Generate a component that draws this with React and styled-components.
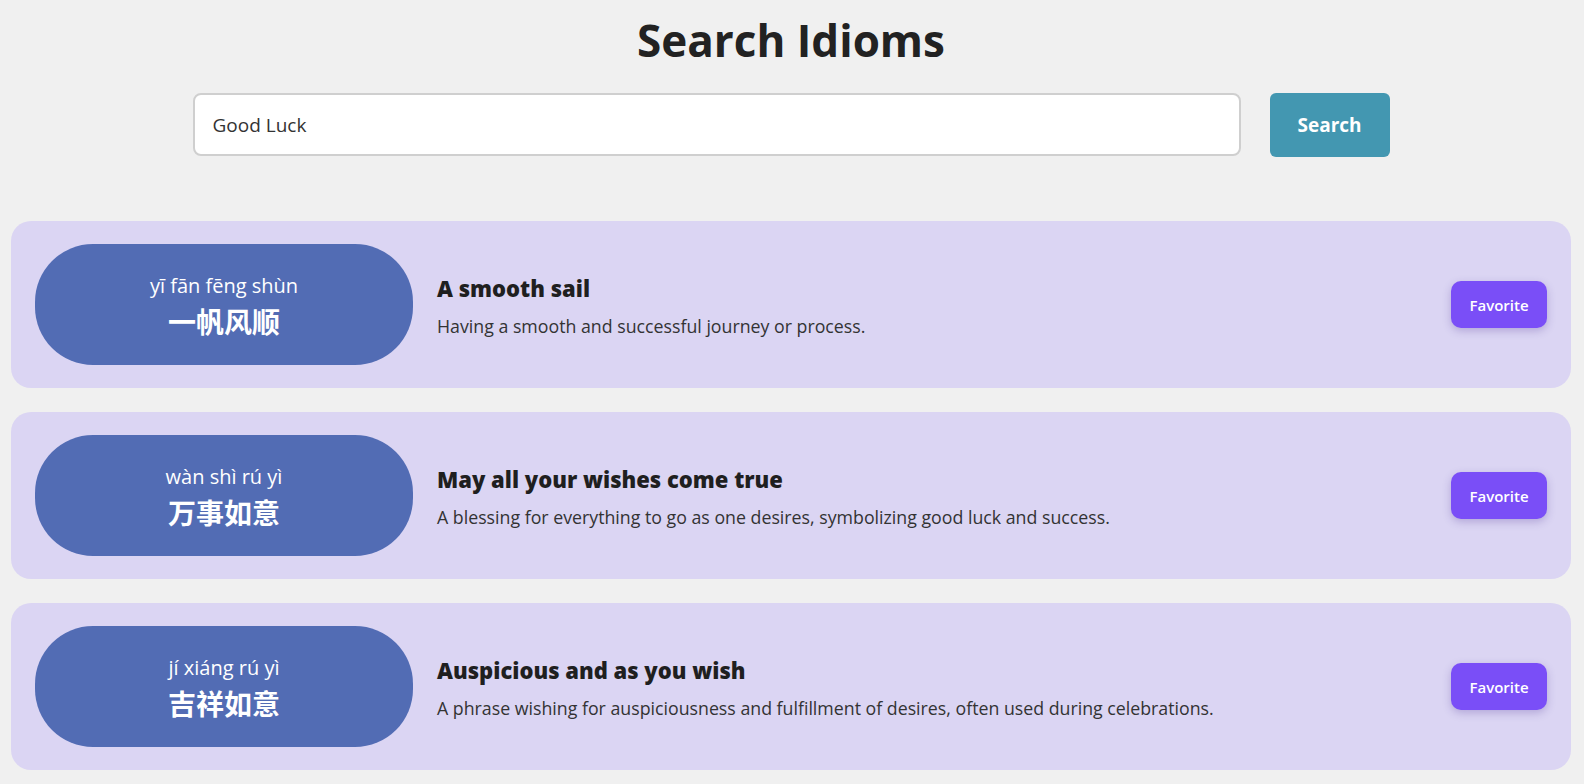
import React, { useState } from "react";
import styled, { createGlobalStyle } from "styled-components";

const GlobalStyle = createGlobalStyle`
  html, body {
    margin: 0;
    padding: 0;
    background: #f0f0f0;
    font-family: "Open Sans", "Noto Sans", "Noto Sans CJK SC", sans-serif;
    color: #222;
  }
  * {
    box-sizing: border-box;
  }
`;

const idioms = [
  {
    pinyin: "yī fān fēng shùn",
    chinese: "一帆风顺",
    title: "A smooth sail",
    meaning: "Having a smooth and successful journey or process.",
  },
  {
    pinyin: "wàn shì rú yì",
    chinese: "万事如意",
    title: "May all your wishes come true",
    meaning:
      "A blessing for everything to go as one desires, symbolizing good luck and success.",
  },
  {
    pinyin: "jí xiáng rú yì",
    chinese: "吉祥如意",
    title: "Auspicious and as you wish",
    meaning:
      "A phrase wishing for auspiciousness and fulfillment of desires, often used during celebrations.",
  },
];

export default function App() {
  const [query, setQuery] = useState("Good Luck");

  return (
    <StPage>
      <GlobalStyle />
      <StHeading>Search Idioms</StHeading>
      <StSearchBar>
        <StInput value={query} onChange={(e) => setQuery(e.target.value)} />
        <StSearchButton>Search</StSearchButton>
      </StSearchBar>
      <StList>
        {idioms.map((idiom) => (
          <StCard key={idiom.chinese}>
            <StPill>
              <span className="pinyin">{idiom.pinyin}</span>
              <span className="chinese">{idiom.chinese}</span>
            </StPill>
            <StBody>
              <h3>{idiom.title}</h3>
              <p>{idiom.meaning}</p>
            </StBody>
            <StFavorite>Favorite</StFavorite>
          </StCard>
        ))}
      </StList>
    </StPage>
  );
}

const StPage = styled.div`
  padding: 12px 13px 14px 11px;
`;

const StHeading = styled.h1`
  margin: 0;
  text-align: center;
  font-size: 44px;
  font-weight: 700;
  line-height: 56px;
  color: #222;
`;

const StSearchBar = styled.div`
  display: flex;
  justify-content: center;
  gap: 29px;
  margin: 25px 0 64px;
`;

const StInput = styled.input`
  width: 1048px;
  height: 63px;
  padding: 0 18px;
  border: 2px solid #cfcfcf;
  border-radius: 8px;
  background: #fff;
  font-family: "Open Sans", "Noto Sans", sans-serif;
  font-size: 19px;
  color: #333;
  outline: none;
`;

const StSearchButton = styled.button`
  width: 120px;
  height: 64px;
  border: none;
  border-radius: 6px;
  background: #4397b1;
  color: #fff;
  font-family: "Open Sans", "Noto Sans", sans-serif;
  font-size: 19px;
  font-weight: 700;
  cursor: pointer;
`;

const StList = styled.div`
  display: flex;
  flex-direction: column;
  gap: 24px;
`;

const StCard = styled.div`
  display: flex;
  align-items: center;
  gap: 24px;
  padding: 23px 24px;
  background: #dbd5f3;
  border-radius: 20px;
`;

const StPill = styled.div`
  flex: 0 0 378px;
  height: 121px;
  border-radius: 58px;
  background: #526cb4;
  color: #fff;
  display: flex;
  flex-direction: column;
  align-items: center;
  justify-content: center;
  gap: 4px;
  padding-top: 2px;
  .pinyin {
    font-size: 20px;
    line-height: 26px;
  }
  .chinese {
    font-family: "Noto Sans CJK SC", sans-serif;
    font-size: 28px;
    font-weight: 700;
    line-height: 36px;
  }
`;

const StBody = styled.div`
  flex: 1;
  display: flex;
  flex-direction: column;
  gap: 12px;
  padding-top: 3px;
  h3 {
    margin: 0;
    font-family: "Open Sans", "Noto Sans", sans-serif;
    font-size: 22px;
    font-weight: 800;
    line-height: 28px;
    color: #1f1f1f;
  }
  p {
    margin: 0;
    font-size: 17.75px;
    line-height: 24px;
    color: #333;
  }
`;

const StFavorite = styled.button`
  width: 96px;
  height: 47px;
  border: none;
  border-radius: 10px;
  background: #7a4ef7;
  color: #fff;
  font-family: "Open Sans", "Noto Sans", sans-serif;
  font-size: 15px;
  font-weight: 600;
  box-shadow: 0 3px 8px rgba(60, 30, 140, 0.25);
  cursor: pointer;
`;
